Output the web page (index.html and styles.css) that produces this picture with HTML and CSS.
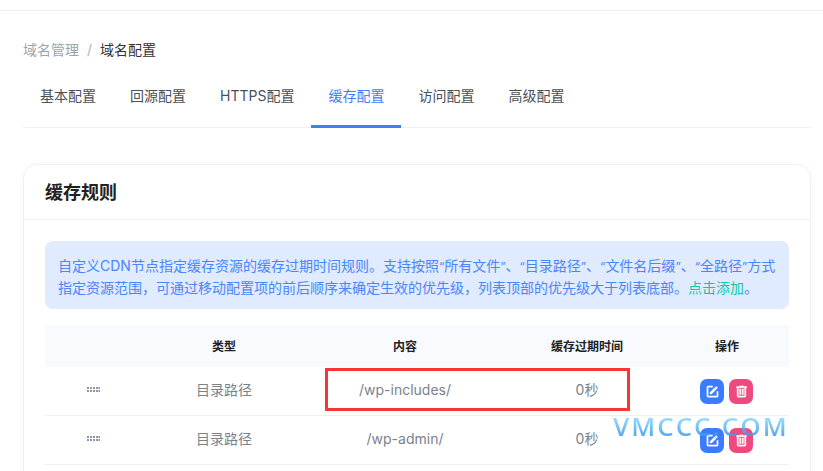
FILE: index.html
```html
<!DOCTYPE html>
<html lang="zh-CN">
<head>
<meta charset="utf-8">
<title>缓存配置</title>
<link rel="stylesheet" href="styles.css">
</head>
<body>
<div class="topbar"></div>
<main class="content">
  <nav class="breadcrumb"><a class="crumb-link">域名管理</a><span class="crumb-sep">/</span><span class="crumb-current">域名配置</span></nav>
  <div class="tabs">
    <a class="tab">基本配置</a>
    <a class="tab">回源配置</a>
    <a class="tab">HTTPS配置</a>
    <a class="tab active">缓存配置</a>
    <a class="tab">访问配置</a>
    <a class="tab">高级配置</a>
  </div>
  <section class="card">
    <h2 class="card-title">缓存规则</h2>
    <div class="card-body">
      <p class="alert">自定义CDN节点指定缓存资源的缓存过期时间规则。支持按照<span class="q">“</span>所有文件<span class="q">”</span>、<span class="q">“</span>目录路径<span class="q">”</span>、<span class="q">“</span>文件名后缀<span class="q">”</span>、<span class="q">“</span>全路径<span class="q">”</span>方式指定资源范围，可通过移动配置项的前后顺序来确定生效的优先级，列表顶部的优先级大于列表底部。<a class="add-link">点击添加</a>。</p>
      <div class="table">
        <div class="row head"><span></span><span>类型</span><span>内容</span><span>缓存过期时间</span><span>操作</span></div>
        <div class="row">
          <span><svg class="drag" viewBox="0 0 13 5" width="13" height="5"><path d="M0 0h2v2H0zM3 0h2v2H3zM6 0h2v2H6zM9 0h2v2H9zM11.500 0h1.500v2h-1.500zM0 3h2v2H0zM3 3h2v2H3zM6 3h2v2H6zM9 3h2v2H9zM11.500 3h1.500v2h-1.500z"/></svg></span>
          <span class="cell">目录路径</span><span class="cell">/wp-includes/</span><span class="cell">0秒</span>
          <span class="actions">
            <button class="btn edit"><svg viewBox="0 0 24 24" width="15" height="15"><path d="M5 3c-1.110 0-2 .89-2 2v14a2 2 0 0 0 2 2h14a2 2 0 0 0 2-2v-7h-2v7H5V5h7V3H5zm12.780 1a.69.69 0 0 0-.48.2l-1.220 1.210 2.500 2.500 1.220-1.210c.26-.26.26-.7 0-.95l-1.550-1.550a.68.68 0 0 0-.47-.2zm-2.410 2.120L8 13.500V16h2.500l7.370-7.380-2.500-2.500z"/></svg></button>
            <button class="btn del"><svg viewBox="0 0 24 24" width="15" height="15"><path d="M9 3v1H4v2h1v13a2 2 0 0 0 2 2h10a2 2 0 0 0 2-2V6h1V4h-5V3H9zM7 6h10v13H7V6zm2 2v9h2V8H9zm4 0v9h2V8h-2z"/></svg></button>
          </span>
        </div>
        <div class="row">
          <span><svg class="drag" viewBox="0 0 13 5" width="13" height="5"><path d="M0 0h2v2H0zM3 0h2v2H3zM6 0h2v2H6zM9 0h2v2H9zM11.500 0h1.500v2h-1.500zM0 3h2v2H0zM3 3h2v2H3zM6 3h2v2H6zM9 3h2v2H9zM11.500 3h1.500v2h-1.500z"/></svg></span>
          <span class="cell">目录路径</span><span class="cell">/wp-admin/</span><span class="cell">0秒</span>
          <span class="actions">
            <button class="btn edit"><svg viewBox="0 0 24 24" width="15" height="15"><path d="M5 3c-1.110 0-2 .89-2 2v14a2 2 0 0 0 2 2h14a2 2 0 0 0 2-2v-7h-2v7H5V5h7V3H5zm12.780 1a.69.69 0 0 0-.48.2l-1.220 1.210 2.500 2.500 1.220-1.210c.26-.26.26-.7 0-.95l-1.550-1.550a.68.68 0 0 0-.47-.2zm-2.410 2.120L8 13.500V16h2.500l7.370-7.380-2.500-2.500z"/></svg></button>
            <button class="btn del"><svg viewBox="0 0 24 24" width="15" height="15"><path d="M9 3v1H4v2h1v13a2 2 0 0 0 2 2h10a2 2 0 0 0 2-2V6h1V4h-5V3H9zM7 6h10v13H7V6zm2 2v9h2V8H9zm4 0v9h2V8h-2z"/></svg></button>
          </span>
        </div>
      </div>
    </div>
  </section>
</main>
<div class="highlight"></div>
<div class="watermark">VMCCC.COM</div>
</body>
</html>
```
FILE: styles.css
```css
* { box-sizing: border-box; }
html, body { height: 100%; }
body {
  margin: 0;
  overflow: hidden;
  background: #fff;
  color: #313a46;
  font: 14px/21px Inter, "Noto Sans CJK SC", sans-serif;
  position: relative;
}
.topbar { height: 11px; border-bottom: 1px solid #eef0f7; }
.content { padding: 28px 12px 0 23px; }
.breadcrumb { display: flex; align-items: center; height: 21px; font-size: 14px; }
.crumb-link { color: #98a6ad; }
.crumb-sep { color: #a6b0bb; margin: 0 8px; }
.crumb-current { color: #333; }
.tabs { display: flex; margin-top: 15px; height: 53px; border-bottom: 1px solid #eef0f7; }
.tab { padding: 10px 17px 0; height: 53px; color: #495057; }
.tab.active { color: #3b7ffb; border-bottom: 3px solid #3b7ffb; }
.card { margin-top: 36px; border: 1px solid #f0f1f7; border-radius: 14px; background: #fff; box-shadow: 0 0 6px rgba(240,242,250,.6); }
.card-title { margin: 0; height: 55px; padding: 0 21px; font-size: 18px; line-height: 56px; font-weight: 700; color: #222; border-bottom: 1px solid #eef0f7; }
.card-body { padding: 21px 21px 24px; }
.alert { margin: 0; padding: 14px 13px; height: 68px; background: #e0ebff; border-radius: 8px; color: #4a86fb; font-size: 14px; line-height: 21px; }
.q { font-size: 12px; }
.add-link { color: #12c8a0; }
.table { margin-top: 16px; }
.row { display: grid; grid-template-columns: 96px 166px 196px 168px 1fr; align-items: center; height: 49px; text-align: center; color: #7a838b; border-bottom: 1px solid #eef0f7; }
.row.head { height: 42px; background: #f9fafe; border-bottom: 0; font-size: 12px; font-weight: 700; color: #222; }
.row.head span:last-child { padding-right: 6px; }
.cell { padding-bottom: 3px; }
.drag { display: block; margin: 0 auto 4px; fill: #8d98a8; }
.actions { display: flex; justify-content: center; gap: 5px; padding-right: 7px; }
.btn { width: 24px; height: 25px; padding: 0; border: 0; border-radius: 7px; display: flex; align-items: center; justify-content: center; }
.btn svg { fill: #fff; stroke: #fff; stroke-width: .7; }
.edit { background: #3a7bff; }
.del { background: #ef4a7e; }
.highlight { position: absolute; left: 325px; top: 368px; width: 305px; height: 43px; border: 3px solid #f93636; }
.watermark {
  position: absolute;
  left: 613px;
  top: 409px;
  font: 600 26px/34px "Open Sans", sans-serif;
  letter-spacing: 2px;
  white-space: nowrap;
  background: linear-gradient(#7fd4ff 30%, #3f9fe8 75%);
  -webkit-background-clip: text;
  background-clip: text;
  color: transparent;
  opacity: .85;
}
```
